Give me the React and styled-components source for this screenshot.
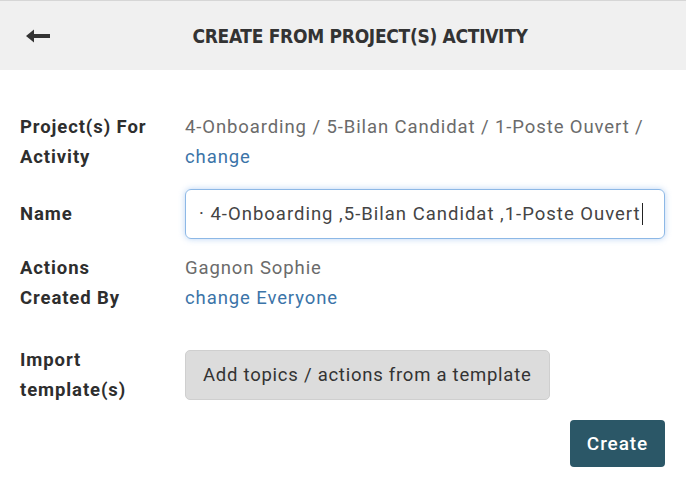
import React from 'react';
import styled, { createGlobalStyle } from 'styled-components';

const Global = createGlobalStyle`
  html, body { margin: 0; padding: 0; background: #fff; }
  body { font-family: Roboto, "Noto Sans", sans-serif; color: #333; }
`;

const Modal = styled.div`
  width: 686px;
  height: 498px;
  background: #fff;
  border-top: 1px solid #d6d6d6;
  box-sizing: border-box;
  display: flex;
  flex-direction: column;
`;

const Header = styled.div`
  height: 69px;
  background: #f0f0f0;
  display: grid;
  grid-template-columns: 70px 1fr 70px;
  align-items: center;
`;

const Back = styled.button`
  border: 0;
  background: none;
  padding: 0 0 0 25px;
  display: flex;
  align-items: center;
  cursor: pointer;
`;

const Title = styled.h1`
  margin: 0;
  text-align: center;
  font-family: "Liberation Sans Narrow", "DejaVu Sans Condensed", sans-serif;
  font-weight: 700;
  font-size: 19px;
  letter-spacing: -0.3px;
  color: #333;
  padding-left: 34px;
`;

const Body = styled.div`
  padding: 42px 21px 0 20px;
  display: flex;
  flex-direction: column;
`;

const Row = styled.div`
  display: grid;
  grid-template-columns: 165px 1fr;
  align-items: center;
  margin-top: ${p => p.$mt || 0}px;
`;

const Label = styled.div`
  font-weight: 700;
  font-size: 18.5px;
  letter-spacing: 0.9px;
  line-height: 30px;
  color: #2e2e2e;
`;

const Value = styled.div`
  font-size: 18.5px;
  letter-spacing: 0.9px;
  line-height: 30px;
  color: #6b6b6b;
`;

const Link = styled.a`
  color: #3b74a8;
  text-decoration: none;
  cursor: pointer;
`;

const Field = styled.div`
  height: 50px;
  box-sizing: border-box;
  border: 1px solid #8db8e6;
  border-radius: 6px;
  box-shadow: 0 0 6px rgba(102, 160, 230, 0.45);
  display: flex;
  align-items: center;
  padding-left: 13px;
  font-size: 18.5px;
  letter-spacing: 1px;
  color: #444;
  overflow: hidden;
  white-space: nowrap;
`;

const Caret = styled.span`
  display: inline-block;
  width: 1.5px;
  height: 22px;
  background: #222;
  margin-left: 1px;
`;

const GreyButton = styled.button`
  height: 50px;
  padding: 0 17px;
  background: #dcdcdc;
  border: 1px solid #cfcfcf;
  border-radius: 5px;
  font-family: Roboto, sans-serif;
  font-size: 18.5px;
  letter-spacing: 0.75px;
  color: #333;
  justify-self: start;
`;

const Footer = styled.div`
  display: flex;
  justify-content: flex-end;
  margin-top: 15px;
`;

const Primary = styled.button`
  height: 47px;
  width: 95px;
  background: #2b5767;
  border: 0;
  border-radius: 4px;
  color: #fff;
  font-family: Roboto, sans-serif;
  font-weight: 500;
  font-size: 19px;
  letter-spacing: 0.9px;
`;

const ArrowLeft = () => (
  <svg width="26" height="16" viewBox="0 0 26 16">
    <path d="M1 8 L9 1.5 L9 6 L25 6 L25 10 L9 10 L9 14.5 Z" fill="#333" />
  </svg>
);

export default function App() {
  return (
    <>
      <Global />
      <Modal>
        <Header>
          <Back><ArrowLeft /></Back>
          <Title>CREATE FROM PROJECT(S) ACTIVITY</Title>
          <div />
        </Header>
        <Body>
          <Row>
            <Label>Project(s) For<br />Activity</Label>
            <Value>
              4-Onboarding / 5-Bilan Candidat / 1-Poste Ouvert /<br />
              <Link>change</Link>
            </Value>
          </Row>
          <Row $mt={17}>
            <Label>Name</Label>
            <Field>
              · 4-Onboarding ,5-Bilan Candidat ,1-Poste Ouvert<Caret />
            </Field>
          </Row>
          <Row $mt={14}>
            <Label>Actions<br />Created By</Label>
            <Value>
              Gagnon Sophie<br />
              <Link>change Everyone</Link>
            </Value>
          </Row>
          <Row $mt={32}>
            <Label>Import<br />template(s)</Label>
            <GreyButton>Add topics / actions from a template</GreyButton>
          </Row>
          <Footer>
            <Primary>Create</Primary>
          </Footer>
        </Body>
      </Modal>
    </>
  );
}
